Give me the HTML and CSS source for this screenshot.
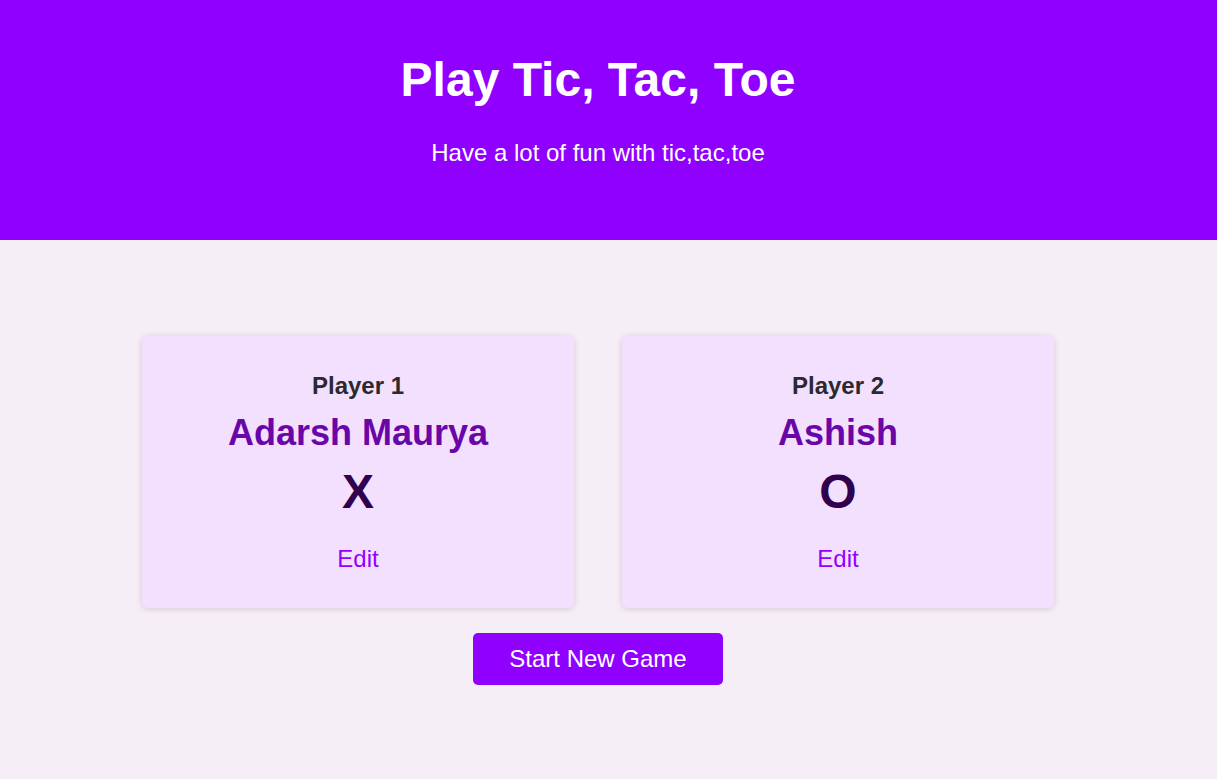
FILE: index.html
```html
<!DOCTYPE html>
<html lang="en">
<head>
<meta charset="utf-8">
<title>Tic Tac Toe</title>
<link rel="stylesheet" href="styles.css">
</head>
<body>
<header class="site-header">
  <div class="inner">
    <h1 class="title">Play Tic, Tac, Toe</h1>
    <p class="subtitle">Have a lot of fun with tic,tac,toe</p>
  </div>
</header>
<main class="main">
  <section class="config">
    <ol class="players">
      <li class="card">
        <h2 class="label">Player 1</h2>
        <h3 class="name">Adarsh Maurya</h3>
        <p class="symbol">X</p>
        <button class="edit">Edit</button>
      </li>
      <li class="card">
        <h2 class="label">Player 2</h2>
        <h3 class="name">Ashish</h3>
        <p class="symbol">O</p>
        <button class="edit">Edit</button>
      </li>
    </ol>
    <button class="start">Start New Game</button>
  </section>
</main>
</body>
</html>
```

FILE: styles.css
```css
* { box-sizing: border-box; }
html, body {
  margin: 0;
  padding: 0;
}
body {
  font-family: "Liberation Sans", Arial, sans-serif;
  background: #f6eef6;
  min-height: 779px;
}
.site-header {
  background: #8f00ff;
  height: 240px;
  color: #ffffff;
}
.inner {
  width: 1196px;
  padding-top: 52px;
  text-align: center;
}
.title {
  margin: 0;
  font-size: 48px;
  font-weight: 700;
  line-height: 55px;
}
.subtitle {
  margin: 32px 0 0;
  font-size: 24px;
  line-height: 28px;
}
.main {
  width: 1196px;
  padding-top: 96px;
}
.config {
  display: flex;
  flex-direction: column;
  align-items: center;
}
.players {
  list-style: none;
  margin: 0;
  padding: 0;
  display: flex;
  gap: 48px;
  justify-content: center;
}
.card {
  width: 432px;
  height: 272px;
  background: #f2e0fe;
  border-radius: 6px;
  box-shadow: 0 1px 6px rgba(60, 20, 80, 0.18);
  display: flex;
  flex-direction: column;
  align-items: center;
  padding-top: 36px;
}
.label {
  margin: 0;
  font-size: 24px;
  line-height: 28px;
  font-weight: 700;
  color: #2a2a2e;
}
.name {
  margin: 12px 0 0;
  font-size: 36px;
  line-height: 41px;
  font-weight: 700;
  color: #6a06a8;
}
.symbol {
  margin: 11px 0 0;
  font-size: 48px;
  line-height: 55px;
  font-weight: 700;
  color: #30004f;
}
.edit {
  margin: 26px 0 0;
  padding: 0;
  border: none;
  background: none;
  font-family: inherit;
  font-size: 24px;
  line-height: 28px;
  color: #9000ff;
  cursor: pointer;
}
.start {
  margin-top: 25px;
  width: 250px;
  height: 52px;
  border: none;
  border-radius: 5px;
  background: #8f00ff;
  color: #ffffff;
  font-family: inherit;
  font-size: 24px;
  cursor: pointer;
}
```
